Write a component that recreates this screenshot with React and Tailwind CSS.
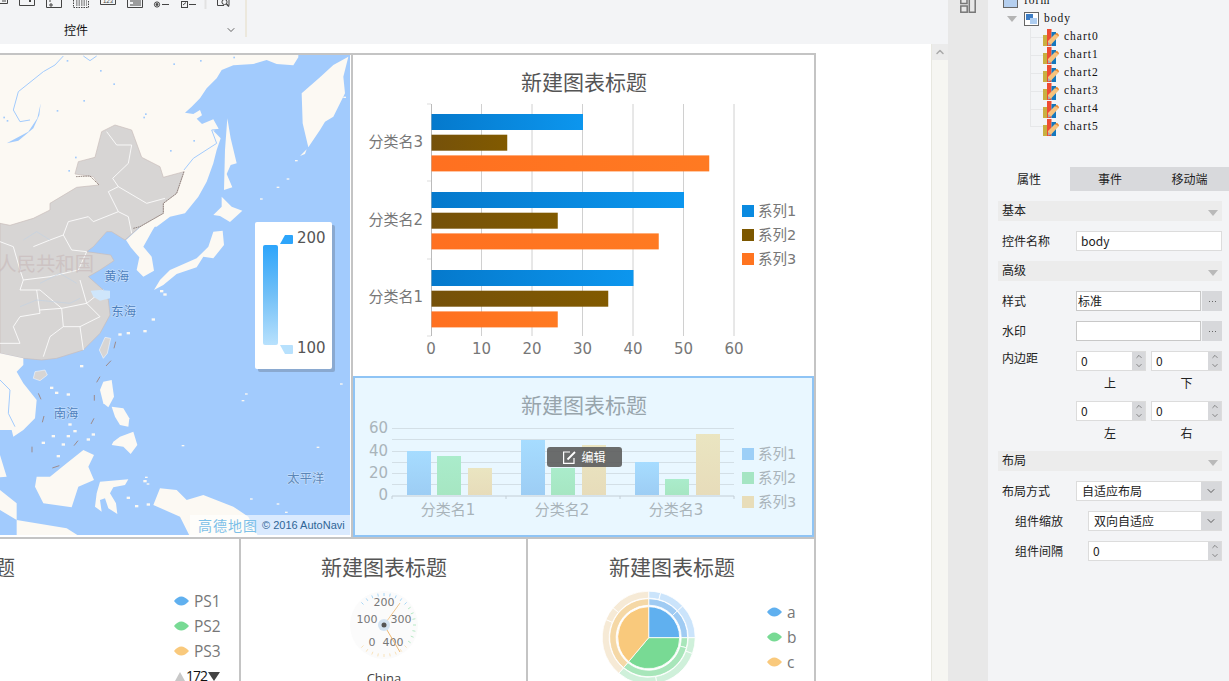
import { ChevronDown, ChevronUp } from "lucide-react";

const chartFont = "font-['DejaVu_Sans','Noto_Sans_CJK_SC',sans-serif]";
const titleFont = "font-['Noto_Sans_CJK_SC',sans-serif]";

function arc(cx, cy, r0, r1, a0, a1) {
  const pt = (r, a) => {
    const t = ((a - 90) * Math.PI) / 180;
    return `${(cx + r * Math.cos(t)).toFixed(2)},${(cy + r * Math.sin(t)).toFixed(2)}`;
  };
  const large = a1 - a0 > 180 ? 1 : 0;
  if (r0 === 0) return `M${cx},${cy} L${pt(r1, a0)} A${r1},${r1} 0 ${large} 1 ${pt(r1, a1)} Z`;
  return `M${pt(r0, a0)} L${pt(r1, a0)} A${r1},${r1} 0 ${large} 1 ${pt(r1, a1)} L${pt(r0, a1)} A${r0},${r0} 0 ${large} 0 ${pt(r0, a0)} Z`;
}

function RibbonIcons() {
  return (
    <svg width="232" height="9" viewBox="0 0 232 9" fill="none" stroke="#444" strokeWidth="1" className="block">
      <path d="M0 3.5H7.5V0M2 1H6" />
      <path d="M19.5 0V5.5H34.5V0" />
      <rect x="29" y="0" width="2" height="2" fill="#444" stroke="none" />
      <path d="M46.5 0V7.5H61.5V0M50 0V2M50 4H52V6H50Z" />
      <path d="M73.5 0V7.5H88.5V0M76 1H87M76 3H87M76 5H87" strokeDasharray="1.5 1" />
      <path d="M100.5 0V4.5H115.5V0" />
      <text x="103" y="3" fontSize="6" fill="#444" stroke="none" fontFamily="Liberation Sans">123</text>
      <path d="M127.5 0V7.5H142.5V0M130 1H141M133 3H141M130 5H141" />
      <circle cx="157" cy="4.5" r="2.6" />
      <circle cx="157" cy="4.5" r="1" fill="#444" />
      <path d="M162 4.5H169" />
      <rect x="181.5" y="1.5" width="6" height="6" />
      <path d="M183 5L186 2.5M189 4.5H196" />
      <path d="M205.5 0V9" stroke="#e2e2e2" strokeWidth="2" />
      <path d="M217.5 0V5.5H224M229 0V5.5" />
      <circle cx="224.5" cy="2" r="2.6" />
      <path d="M226.5 4L229 6.5" strokeWidth="1.5" />
    </svg>
  );
}

const specks = [
  [200, 30], [300, 60], [520, 40], [600, 30], [700, 20], [10, 200], [20, 210], [430, 200], [435, 190], [225, 320], [205, 360], [580, 270],
  [510, 300], [170, 180], [250, 150], [340, 100], [1030, 140], [885, 330], [860, 385], [830, 410], [780, 445],
  [1020, 1000], [725, 1050], [735, 1030], [545, 1185], [950, 1190], [435, 1280], [440, 1300], [750, 1345], [830, 1360], [855, 1385],
];

const isles = [
  [150, 1010], [165, 1025], [200, 1030], [205, 1120], [220, 1140], [200, 1155], [185, 1180], [125, 1175], [155, 1155], [170, 1215],
  [260, 1165], [275, 1150], [355, 850], [380, 846], [430, 840], [455, 805], [480, 720], [490, 730], [405, 1365], [440, 1360], [380, 1340], [430, 1290], [240, 945],
];

function MapArt() {
  const land = "#fcf9f3";
  const grey = "#d7d5d4";
  return (
    <svg viewBox="0 55 350 480" className="block h-[480px] w-[350px]">
      <rect x="0" y="55" width="350" height="480" fill="#a2cbfd" />
      <g transform="translate(0,50) scale(0.33333)">
        {/* russia and mongolia */}
        <path
          fill={land}
          d="M0,0 L895,0 L895,22 L880,46 L830,42 L800,30 L760,42 L700,46 L665,60 L650,85 L620,115 L600,145 L575,170 L555,188 L580,192 L600,180 L606,196 L590,206 L606,222 L640,208 L656,236 L640,242 L662,265 L650,300 L640,340 L620,395 L595,440 L555,490 L510,500 L470,530 L0,530Z"
        />
        <path fill={land} d="M1045,20 L1030,80 L1035,130 L1000,200 L975,215 L960,240 L925,292 L908,220 L905,130 L960,82 L1000,45Z" />
        <path fill={land} d="M682,205 L692,265 L710,340 L692,345 L680,372 L697,412 L672,420 L675,300Z" />
        <path fill={land} d="M665,440 L695,470 L727,482 L690,516 L660,498 L640,495 L665,470Z" />
        <path fill={land} d="M640,545 L668,542 L672,585 L640,625 L610,620 L590,652 L530,672 L490,705 L462,720 L480,690 L510,660 L590,625 L625,590Z" />
        <path fill={land} d="M900,318 L920,298 L915,312Z" />
        {/* korea */}
        <path fill={land} d="M378,570 L420,532 L490,490 L458,540 L430,590 L455,620 L462,662 L430,680 L410,660 L418,622 L392,592Z" />
        {/* baikal and rivers */}
        <path fill="none" stroke="#a2cbfd" strokeWidth="3" d="M190,18 L165,45 L130,65 L55,125 L40,180 L60,215 L90,210" />
        <path fill="#a2cbfd" d="M122,160 L112,205 L85,245 L20,280 L55,272 L100,235 L118,195Z" />
        <path fill="none" stroke="#a2cbfd" strokeWidth="3" d="M552,360 L580,325 L650,280 L635,240 L660,238M250,18 L270,32 L290,18" />
        <g fill="#a2cbfd">
          {specks.slice(0, 16).map(([x, y]) => <rect key={`${x}-${y}`} x={x} y={y} width="5" height="5" />)}
        </g>
        {/* china */}
        <path
          fill={grey}
          stroke="#c8bcb9"
          strokeWidth="2"
          d="M0,520 L30,526 L100,505 L150,480 L150,460 L230,412 L297,405 L280,380 L225,372 L235,335 L285,322 L305,245 L345,225 L395,240 L425,322 L480,350 L490,382 L552,365 L530,430 L490,460 L490,490 L420,530 L375,570 L335,545 L320,545 L280,590 L260,605 L332,615 L342,632 L300,660 L265,680 L310,720 L325,750 L330,795 L300,850 L250,900 L170,925 L125,930 L70,925 L0,910Z"
        />
        <path fill="none" stroke="#fff" strokeWidth="2.5" d="M320,245 L350,285 L395,285 L385,340 L338,385 L355,410 L325,425 L355,485 L280,515 L265,500 L205,515 L190,555 L150,570 L100,590 M355,410 L440,460 L495,445 M355,485 L385,500 L395,550 M190,555 L215,600 L260,605 L235,660 L150,680 L70,690 L60,720 M0,575 L40,590 L60,660 L70,690 M110,720 L120,790 L60,800 L40,830 L60,880 L0,880 M120,780 L185,775 L190,830 L150,860 L130,920 M185,775 L260,760 L300,800 L240,830 L250,900 M190,830 L240,830 M60,720 L120,720 L185,775 M240,690 L260,760 M310,720 L260,760" />
        <path fill="none" stroke="#6b5b55" strokeWidth="2" strokeDasharray="5 2" d="M552,365 L530,430 L490,460 L490,490 L420,530 L400,535 M228,380 L270,378 L297,405" />
        <path fill="none" stroke="#c2d2e2" strokeWidth="2" d="M70,570 L110,545 L150,570M120,700 L180,670 L230,700M60,770 L110,750 L210,760 L240,745" />
        {/* watermark */}
        <text x="-8" y="662" fontSize="58" fill="#c9bcbc" fontFamily="Noto Sans CJK SC" opacity="0.7">人民共和国</text>
        {/* lakes by the coast */}
        <path fill="#cfe6fb" d="M272,722 L300,720 L330,722 L330,745 L300,752 L280,740Z" />
        {/* south east */}
        <path fill={land} d="M0,910 L70,925 L70,945 L50,965 L70,1000 L110,1050 L105,1105 L70,1140 L40,1160 L35,1140 L0,1140Z" />
        <path fill="none" stroke="#a2cbfd" strokeWidth="3" d="M0,990 L30,1020 L25,1090 L45,1130" />
        <path fill={land} d="M0,1215 L20,1280 L0,1282Z M0,1320 L50,1360 L50,1410 L0,1380Z M50,1410 L200,1435 L240,1460 L50,1460Z" />
        <path fill={land} d="M110,1280 L150,1280 L200,1240 L250,1200 L282,1215 L265,1250 L282,1290 L235,1310 L215,1372 L130,1360 L105,1310Z" />
        <path fill={land} d="M300,1295 L385,1288 L375,1305 L340,1312 L330,1330 L348,1360 L352,1392 L325,1375 L315,1345 L300,1350 L305,1385 L285,1370 L290,1330Z" />
        <path fill={land} d="M480,1315 L530,1320 L560,1350 L610,1335 L700,1370 L745,1400 L775,1460 L570,1460 L540,1400 L460,1365Z" />
        <path fill={land} d="M310,995 L335,990 L342,1040 L325,1072 L310,1060 L300,1020Z" />
        <path fill={land} d="M340,1175 L360,1160 L400,1145 L412,1185 L392,1212 L370,1190 L335,1185Z" />
        <path fill={land} d="M335,1070 L370,1075 L388,1105 L385,1130 L360,1125 L345,1100Z" />
        <g fill={land}>
          {isles.map(([x, y]) => <rect key={`${x}-${y}`} x={x} y={y} width="10" height="7" />)}
        </g>
        <g fill={land}>
          {specks.slice(16).map(([x, y]) => <rect key={`${x}-${y}`} x={x} y={y} width="8" height="4" />)}
        </g>
        <path fill={grey} stroke="#fff" strokeWidth="1.5" d="M315,862 L332,865 L322,910 L310,925 L298,900Z" />
        <path fill={grey} stroke="#fff" strokeWidth="1.5" d="M105,965 L135,960 L142,975 L120,992 L100,985Z" />
        <path fill="none" stroke="#9d8b8b" strokeWidth="3" d="M347,875 L342,895M333,932 L318,948M300,980 L290,997M283,1035 L283,1052M115,1030 L123,1048M132,1098 L127,1117M282,1105 L273,1122M234,1172 L222,1187M96,1190 L96,1207M178,1247 L157,1254" />
        <g fontSize="37" fontFamily="Noto Sans CJK SC" fill="#4c80bf" stroke="#cfe3fb" strokeWidth="3" paintOrder="stroke">
          <text x="313" y="692">黄海</text>
          <text x="334" y="798">东海</text>
          <text x="161" y="1104">南海</text>
          <text x="862" y="1298" fill="#5a86b8">太平洋</text>
        </g>
      </g>
    </svg>
  );
}

function MapLegend() {
  return (
    <svg viewBox="255 222 77 147" className="block h-[147px] w-[77px]">
      <defs>
        <linearGradient id="vm" x1="0" y1="0" x2="0" y2="1">
          <stop offset="0" stopColor="#2da5fb" />
          <stop offset="0.5" stopColor="#72c0f7" />
          <stop offset="1" stopColor="#b8e1fd" />
        </linearGradient>
      </defs>
      <path d="M263,247 Q263,245 265,245 H276 Q278,245 278,247 V343 Q278,345 276,345 H265 Q263,345 263,343Z" fill="url(#vm)" />
      <path d="M285,235 H292 Q293,235 293,236 V243 Q293,244 292,244 H280Z" fill="#2da5fb" />
      <path d="M280,345 H292 Q293,345 293,346 V353 Q293,354 292,354 H285Z" fill="#b8e1fd" />
      <g className={chartFont} fontSize="15" fill="#555">
        <text x="297" y="243">200</text>
        <text x="297" y="353">100</text>
      </g>
    </svg>
  );
}

function BarChart() {
  const groups = [
    { name: "分类名3", y: 114, tick: 142, vals: [30, 15, 55] },
    { name: "分类名2", y: 192, tick: 220, vals: [50, 25, 45] },
    { name: "分类名1", y: 270, tick: 297, vals: [40, 35, 25] },
  ];
  const fills = ["url(#hb1)", "url(#hb2)", "url(#hb3)"];
  const x0 = 431;
  const unit = 5.05;
  return (
    <svg viewBox="354 55 460 320" className={`ml-px block h-[320px] w-[460px] ${chartFont}`}>
      <defs>
        <linearGradient id="hb1"><stop offset="0" stopColor="#0579cc" /><stop offset="1" stopColor="#0c96ee" /></linearGradient>
        <linearGradient id="hb2"><stop offset="0" stopColor="#75510a" /><stop offset="1" stopColor="#815a00" /></linearGradient>
        <linearGradient id="hb3"><stop offset="0" stopColor="#ff7020" /><stop offset="1" stopColor="#ff7a22" /></linearGradient>
      </defs>
      <text x="584" y="90" textAnchor="middle" fontSize="21" fill="#555" className={titleFont}>新建图表标题</text>
      {[10, 20, 30, 40, 50, 60].map((v) => (
        <line key={v} x1={x0 + v * unit} x2={x0 + v * unit} y1="104" y2="336" stroke="#d0d0d0" />
      ))}
      <line x1="431.5" x2="431.5" y1="104" y2="336" stroke="#bbb" />
      {[104, 181, 259, 336].map((y) => (
        <line key={y} x1="427" x2="431" y1={y} y2={y} stroke="#ddd" />
      ))}
      {groups.map((g) => (
        <g key={g.name}>
          <text x="423" y={g.tick + 5} textAnchor="end" fontSize="15" fill="#777">{g.name}</text>
          {g.vals.map((v, i) => (
            <rect key={i} x={x0 + 0.5} y={g.y + i * 20.7} width={v * unit} height="16" fill={fills[i]} />
          ))}
        </g>
      ))}
      {[0, 10, 20, 30, 40, 50, 60].map((v) => (
        <text key={v} x={x0 + v * unit} y="354" textAnchor="middle" fontSize="15" fill="#777">{v}</text>
      ))}
      {["系列1", "系列2", "系列3"].map((s, i) => (
        <g key={s}>
          <rect x="742" y={205 + i * 24} width="12" height="12" fill={["#0a8ae0", "#7c5700", "#ff7420"][i]} />
          <text x="758" y={216 + i * 24} fontSize="14.5" fill="#777">{s}</text>
        </g>
      ))}
    </svg>
  );
}

function ColumnChart() {
  const bars = [
    [407, 451, "url(#cb1)"], [437, 456, "url(#cb2)"], [468, 468, "url(#cb3)"],
    [521, 440, "url(#cb1)"], [551, 468, "url(#cb2)"], [582, 445, "url(#cb3)"],
    [635, 462, "url(#cb1)"], [665, 479, "url(#cb2)"], [696, 434, "url(#cb3)"],
  ];
  return (
    <svg viewBox="355 378 458 156" className={`block h-[156px] w-[458px] ${chartFont}`}>
      <defs>
        <linearGradient id="cb1" x1="0" y1="0" x2="0" y2="1"><stop offset="0" stopColor="#a6dcff" /><stop offset="1" stopColor="#9dcdf4" /></linearGradient>
        <linearGradient id="cb2" x1="0" y1="0" x2="0" y2="1"><stop offset="0" stopColor="#aaeccb" /><stop offset="1" stopColor="#a6e6c2" /></linearGradient>
        <linearGradient id="cb3" x1="0" y1="0" x2="0" y2="1"><stop offset="0" stopColor="#eae5c1" /><stop offset="1" stopColor="#e7dcba" /></linearGradient>
      </defs>
      <text x="584" y="413" textAnchor="middle" fontSize="21" fill="#98a5ac" className={titleFont}>新建图表标题</text>
      {[428, 439, 451, 462, 473, 484].map((y) => (
        <line key={y} x1="392" x2="734" y1={y + 0.5} y2={y + 0.5} stroke="#d3dfe6" />
      ))}
      <line x1="392" x2="734" y1="496" y2="496" stroke="#c3ced6" />
      {[392, 506, 620, 734].map((x) => (
        <line key={x} x1={x} x2={x} y1="496" y2="499" stroke="#c3ced6" />
      ))}
      {bars.map(([x, y, f]) => (
        <rect key={x} x={x} y={y} width="24" height={495 - y} fill={f} />
      ))}
      {[["60", 433], ["40", 456], ["20", 478], ["0", 500]].map(([t, y]) => (
        <text key={t} x="388" y={y} textAnchor="end" fontSize="15" fill="#a9b4ba">{t}</text>
      ))}
      {[["分类名1", 448], ["分类名2", 562], ["分类名3", 676]].map(([t, x]) => (
        <text key={t} x={x} y="515" textAnchor="middle" fontSize="15" fill="#a9b4ba">{t}</text>
      ))}
      {["系列1", "系列2", "系列3"].map((s, i) => (
        <g key={s}>
          <rect x="742" y={448 + i * 24} width="12" height="12" fill={["#9dcff7", "#a5e5c3", "#e8ddb9"][i]} />
          <text x="758" y={459 + i * 24} fontSize="14.5" fill="#a9b4ba">{s}</text>
        </g>
      ))}
    </svg>
  );
}

function Diamond({ x, y, fill }) {
  return <path d={`M${x},${y} Q${x + 7},${y - 9} ${x + 15},${y} Q${x + 7},${y + 9} ${x},${y}Z`} fill={fill} />;
}

function RadarCell() {
  return (
    <svg viewBox="0 539 239 142" className={`block h-[142px] w-[239px] ${chartFont}`}>
      <text x="-48" y="575" textAnchor="middle" fontSize="21" fill="#555" className={titleFont}>新建图表标题</text>
      {[["PS1", 601, "#60b0ef"], ["PS2", 626, "#78da94"], ["PS3", 651, "#f9c97c"]].map(([t, y, c]) => (
        <g key={t}>
          <Diamond x={174} y={y} fill={c} />
          <text x="194" y={y + 5.5} fontSize="15.5" fill="#777" fontFamily="Open Sans">{t}</text>
        </g>
      ))}
      <path d="M175,681 L180,672 L185,681Z" fill="#c8c8c8" />
      <text x="186" y="681" fontSize="14" letterSpacing="-1" fill="#111" fontFamily="Open Sans">172</text>
      <path d="M208,672 H220 L214,681Z" fill="#444" />
    </svg>
  );
}

function GaugeCell() {
  const ticks = Array.from({ length: 25 }, (_, i) => {
    const a = ((-225 + i * 11.25) * Math.PI) / 180;
    const c = i < 9 ? "#a6d6f7" : i < 16 ? "#b6e9c5" : "#f9e3bb";
    return { a, c };
  });
  const cx = 143;
  const cy = 625;
  return (
    <svg viewBox="241 539 285 142" className={`block h-[142px] w-[285px] ${chartFont}`}>
      <g transform="translate(241,0)">
        <text x="143" y="575" textAnchor="middle" fontSize="21" fill="#555" className={titleFont}>新建图表标题</text>
        <circle cx={cx} cy={cy} r="34" fill="#fbfbfb" />
        {ticks.map((t, i) => (
          <line
            key={i}
            x1={cx + 29 * Math.cos(t.a + Math.PI / 2)}
            y1={cy + 29 * Math.sin(t.a + Math.PI / 2)}
            x2={cx + 32 * Math.cos(t.a + Math.PI / 2)}
            y2={cy + 32 * Math.sin(t.a + Math.PI / 2)}
            stroke={t.c}
          />
        ))}
        <g fontSize="11" fill="#777" textAnchor="middle">
          <text x="143" y="606">200</text>
          <text x="126" y="623">100</text>
          <text x="160" y="623">300</text>
          <text x="131" y="646">0</text>
          <text x="152" y="646">400</text>
        </g>
        <line x1={cx} y1={cy} x2="159" y2="603" stroke="#f2c890" />
        <line x1={cx} y1={cy} x2="159" y2="652" stroke="#f0b870" />
        <circle cx={cx} cy={cy} r="6" fill="#d3e3f2" />
        <circle cx={cx} cy={cy} r="2.5" fill="#555" />
        <text x="143" y="683" textAnchor="middle" fontSize="13" fill="#444" fontFamily="Open Sans">China</text>
      </g>
    </svg>
  );
}

function SunburstCell() {
  const cx = 648.7;
  const cy = 637.7;
  const inner = [[0, 90, "#60b0ef"], [90, 220, "#78da94"], [220, 360, "#f9c97c"]];
  const mid = [[0, 47, "#9fcbf3"], [47, 90, "#9fcbf3"], [90, 105, "#a8e6ba"], [105, 220, "#a8e6ba"], [220, 360, "#f5d8a6"]];
  const outer = [
    [0, 15, "#cbe4fb"], [15, 47, "#cbe4fb"], [47, 90, "#cbe4fb"],
    [90, 110, "#cff0da"], [110, 170, "#cff0da"], [170, 220, "#cff0da"],
    [220, 293, "#f6ead6"], [293, 310, "#f6ead6"], [310, 360, "#f6ead6"],
  ];
  return (
    <svg viewBox="528 539 286 142" className={`block h-[142px] w-[286px] ${chartFont}`}>
      <text x="672" y="575" textAnchor="middle" fontSize="21" fill="#555" className={titleFont}>新建图表标题</text>
      {inner.map(([a, b, c]) => <path key={a} d={arc(cx, cy, 0, 31, a, b)} fill={c} stroke="#fff" strokeWidth="0.8" />)}
      {mid.map(([a, b, c]) => <path key={a} d={arc(cx, cy, 32.5, 39, a, b)} fill={c} stroke="#fff" strokeWidth="0.8" />)}
      {outer.map(([a, b, c]) => <path key={a} d={arc(cx, cy, 39.5, 46.5, a, b)} fill={c} stroke="#fff" strokeWidth="0.8" />)}
      {[["a", 612, "#60b0ef"], ["b", 637, "#78da94"], ["c", 662, "#f9c97c"]].map(([t, y, c]) => (
        <g key={t}>
          <Diamond x={767} y={y} fill={c} />
          <text x="787" y={y + 5.5} fontSize="15.5" fill="#777" fontFamily="Open Sans">{t}</text>
        </g>
      ))}
    </svg>
  );
}

function ChartIcon() {
  return (
    <svg width="16" height="17" viewBox="0 0 16 17" className="shrink-0">
      <rect x="0" y="6" width="5" height="11" fill="#c9b040" />
      <rect x="4" y="0" width="4.5" height="17" fill="#ef4c32" />
      <rect x="8.5" y="3" width="4.5" height="14" fill="#1477bd" />
      <path d="M5,12 L12,5 L15.5,7.5 L8.5,15 L5,16Z" fill="#f7c27c" />
      <path d="M12,5 L14,3.8 L16,6 L15.5,7.5Z" fill="#f08a2c" />
      <path d="M5,13 L8,15.5 L5,16.5Z" fill="#a9a9b5" />
    </svg>
  );
}

function Tree() {
  return (
    <div className="h-[167px] overflow-hidden font-['Liberation_Serif',serif] text-[11.5px] tracking-[1px] text-[#111]">
      <div className="-mt-[8px] flex h-[18px] items-center gap-[6px] pl-[15px]">
        <span className="block h-[14px] w-[15px] border border-[#666] bg-[#b5cfef]" />
        <span>form</span>
      </div>
      <div className="flex h-[18px] items-center pl-[19px]">
        <svg width="10" height="6" viewBox="0 0 10 6" className="mr-[7px]"><path d="M0 0H10L5 6Z" fill="#b4b4b4" /></svg>
        <svg width="15" height="14" viewBox="0 0 15 14" className="mr-[5px]">
          <rect x="0.5" y="0.5" width="14" height="13" fill="#fff" stroke="#666" />
          <rect x="2" y="2" width="7" height="6" fill="#3c7cc4" />
          <rect x="6" y="6" width="7" height="6" fill="#aecdf0" />
        </svg>
        <span>body</span>
      </div>
      {[0, 1, 2, 3, 4, 5].map((n) => (
        <div key={n} className="flex h-[18px] items-center pl-[42px]">
          <span className={n === 5 ? "h-[9px] w-[13px] self-start border-b border-l border-[#e6e7e9]" : "flex h-full w-[13px] items-center border-l border-[#e6e7e9]"}>
            {n !== 5 && <span className="block h-px w-full bg-[#e6e7e9]" />}
          </span>
          <ChartIcon />
          <span className="ml-[5px]">chart{n}</span>
        </div>
      ))}
    </div>
  );
}

function Section({ title }) {
  return (
    <div className="mb-[10px] flex h-[20px] items-center justify-between bg-[#ececec] pl-[4px] pr-[4px]">
      <span className="-mt-[2px]">{title}</span>
      <svg width="10" height="6" viewBox="0 0 10 6" className="mt-[4px]"><path d="M0 0H10L5 6Z" fill="#b9b9b9" /></svg>
    </div>
  );
}

function Row({ label, indent, children }) {
  return (
    <div className="mb-[10px] flex h-[20px] items-center">
      <span className={indent ? "w-[90px] pl-[17px]" : "w-[78px] pl-[4px]"}>{label}</span>
      <div className="flex h-full min-w-0 flex-1">{children}</div>
    </div>
  );
}

function Dots() {
  return (
    <span className="ml-px flex h-full w-[20px] items-center justify-center gap-[2px] bg-[#d7d8db]">
      <i className="block h-px w-px bg-[#666]" />
      <i className="block h-px w-px bg-[#666]" />
      <i className="block h-px w-px bg-[#666]" />
    </span>
  );
}

function Spinner({ value, width }) {
  return (
    <div className={`flex h-[20px] ${width} border border-[#dcdcdc] bg-white`}>
      <span className="flex-1 pl-[4px] leading-[18px]">{value}</span>
      <span className="flex w-[13px] flex-col items-center justify-center bg-[#d7d8db] text-[#444]">
        <ChevronUp size={10} strokeWidth={1.5} />
        <ChevronDown size={10} strokeWidth={1.5} />
      </span>
    </div>
  );
}

function Select({ value }) {
  return (
    <div className="flex h-full flex-1 border border-[#dcdcdc] bg-white">
      <span className="flex-1 pl-[5px] leading-[18px]">{value}</span>
      <span className="flex w-[20px] items-center justify-center bg-[#d7d8db] text-[#333]">
        <ChevronDown size={12} strokeWidth={1.5} />
      </span>
    </div>
  );
}

function SpinPair({ label, a, b }) {
  return (
    <div className="flex h-[20px] items-center">
      <span className="-mt-[6px] w-[78px] pl-[4px]">{label}</span>
      <Spinner value={a} width="w-[70px]" />
      <span className="w-[5px]" />
      <Spinner value={b} width="w-[71px]" />
    </div>
  );
}

function Captions({ a, b }) {
  return (
    <div className="mb-[8px] mt-[2px] flex h-[20px] items-center">
      <span className="w-[78px]" />
      <span className="w-[68px] text-center">{a}</span>
      <span className="w-[7px]" />
      <span className="w-[71px] text-center">{b}</span>
    </div>
  );
}

function Props() {
  return (
    <div className="pl-[10px] pr-[7px] pt-[10px] text-[12px] text-[#222]">
      <Section title="基本" />
      <Row label="控件名称">
        <div className="flex-1 border border-[#dcdcdc] bg-white pl-[4px] leading-[18px]">body</div>
      </Row>
      <Section title="高级" />
      <Row label="样式">
        <div className="flex-1 border border-[#c8c8c8] bg-white pl-[1px] leading-[18px]">标准</div>
        <Dots />
      </Row>
      <Row label="水印">
        <div className="flex-1 border border-[#c8c8c8] bg-white" />
        <Dots />
      </Row>
      <SpinPair label="内边距" a="0" b="0" />
      <Captions a="上" b="下" />
      <SpinPair a="0" b="0" />
      <Captions a="左" b="右" />
      <Section title="布局" />
      <Row label="布局方式"><Select value="自适应布局" /></Row>
      <Row label="组件缩放" indent><Select value="双向自适应" /></Row>
      <Row label="组件间隔" indent>
        <Spinner value="0" width="flex-1" />
      </Row>
    </div>
  );
}

export default function App() {
  return (
    <div className={`flex h-[681px] w-[1229px] overflow-hidden bg-white text-[12px] ${titleFont}`}>
      <div className="flex w-[948px] shrink-0 flex-col">
        <header className="h-[44px] shrink-0 bg-[#f3f4f6]">
          <div className="h-[37px] w-[247px] border-r-2 border-[#ece8dd]">
            <RibbonIcons />
            <div className="mt-[13px] flex h-[16px] items-center pl-[64px] pr-[8px] text-[#111]">
              <span>控件</span>
              <ChevronDown size={12} strokeWidth={1.5} className="ml-auto text-[#333]" />
            </div>
          </div>
        </header>
        <div className="flex min-h-0 flex-1">
          <div className="min-w-0 flex-1 overflow-hidden pt-[9px]">
            <div className="w-[816px] border-r-2 border-t-2 border-[#c4c4c4]">
              <div className="flex h-[482px]">
                <div className="relative h-[480px] w-[350px] shrink-0 overflow-hidden">
                  <MapArt />
                  <div className="absolute left-[255px] top-[167px] rounded-[2px] bg-white shadow-[3px_3px_0_#8aa9d0]">
                    <MapLegend />
                  </div>
                  <div className="absolute bottom-0 right-0 flex h-[20px] w-[160px] items-center gap-[4px] bg-white/60 pl-[8px]">
                    <span className="text-[14px] leading-none tracking-[1px] text-[#7cc0e8]">高德地图</span>
                    <span className="font-['Liberation_Sans',sans-serif] text-[11px] leading-none text-[#2f6596]">© 2016 AutoNavi</span>
                  </div>
                </div>
                <div className="ml-px w-[2px] shrink-0 bg-[#c4c4c4]" />
                <div className="flex min-w-0 flex-1 flex-col">
                  <div className="h-[321px] shrink-0">
                    <BarChart />
                  </div>
                  <div className="relative flex-1 border-2 border-[#8fc4f5] bg-[#e9f7ff]">
                    <ColumnChart />
                    <div className="absolute left-[192px] top-[69px] flex h-[20px] w-[75px] items-center justify-center gap-[5px] rounded-[3px] bg-[#5c5c5c]/90 text-[12px] text-white">
                      <svg width="13" height="13" viewBox="0 0 13 13" fill="none" stroke="#fff" strokeWidth="1.2">
                        <path d="M11 7V12.4H0.6V1H7" />
                        <path d="M4.5 8.5L12 1" strokeWidth="1.8" />
                      </svg>
                      <span>编辑</span>
                    </div>
                  </div>
                </div>
              </div>
              <div className="flex h-[144px] border-t-2 border-[#c4c4c4]">
                <div className="box-content w-[239px] shrink-0 overflow-hidden border-r-2 border-[#c4c4c4]"><RadarCell /></div>
                <div className="box-content w-[285px] shrink-0 overflow-hidden border-r-2 border-[#c4c4c4]"><GaugeCell /></div>
                <div className="min-w-0 flex-1 overflow-hidden"><SunburstCell /></div>
              </div>
            </div>
          </div>
          <div className="flex w-[17px] shrink-0 flex-col border-l border-[#e8e8e0] bg-[#f6f6f2]">
            <div className="flex h-[16px] items-center justify-center bg-[#ebebeb] text-[#aaa]">
              <ChevronUp size={12} strokeWidth={3} />
            </div>
          </div>
        </div>
      </div>
      <div className="w-[40px] shrink-0 bg-[#e8e8e8] pl-[12px]">
        <svg width="16" height="13" viewBox="0 0 16 13" fill="none" stroke="#777" strokeWidth="1.5" className="block">
          <path d="M0.8 0V3.5H7V0" />
          <rect x="0.8" y="6" width="6.4" height="6.2" />
          <path d="M9.3 0V12.2H15.2V0" />
        </svg>
      </div>
      <aside className="min-w-0 flex-1 bg-[#f3f4f6]">
        <Tree />
        <div className="flex h-[24px] items-center text-[12px] text-[#222]">
          <div className="flex h-full w-[82px] items-center justify-center">属性</div>
          <div className="flex h-full w-[80px] items-center justify-center bg-[#d8d9dc]">事件</div>
          <div className="flex h-full flex-1 items-center justify-center bg-[#d8d9dc]">移动端</div>
        </div>
        <Props />
      </aside>
    </div>
  );
}
